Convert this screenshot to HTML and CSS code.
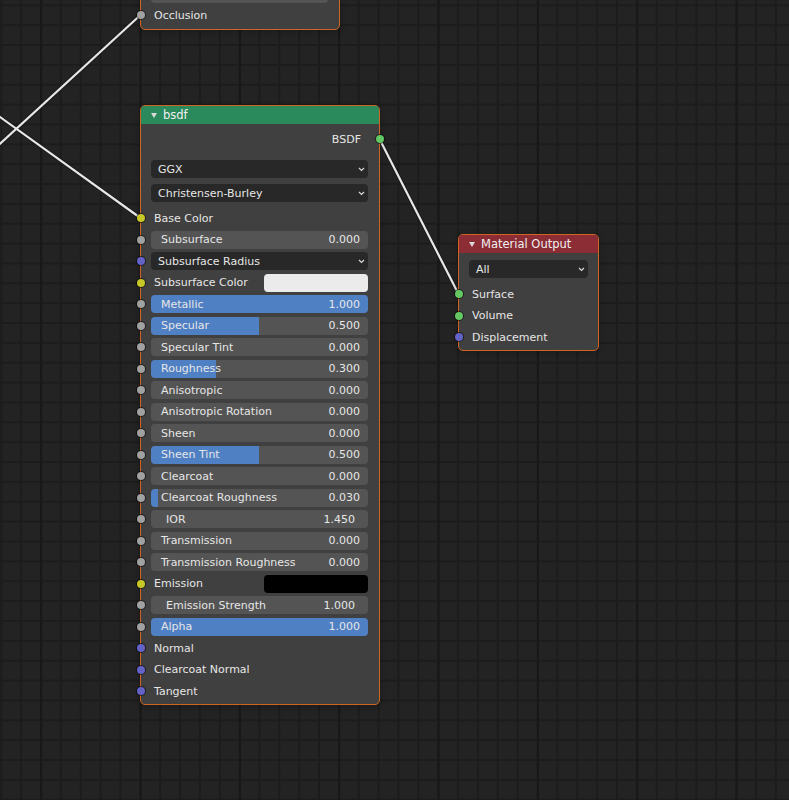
FILE: index.html
```html
<!DOCTYPE html>
<html lang="en">
<head>
  <meta charset="UTF-8" />
  <meta name="viewport" content="width=device-width, initial-scale=1" />
  <title>Shader Editor</title>
  <link rel="stylesheet" href="styles.css">
</head>
<body>

  <div class="canvas">
    <!-- noodles between sockets -->
    <svg class="links" width="789" height="800" viewBox="0 0 789 800">
      <g class="link-shadow">
        <line x1="140.5" y1="15" x2="-10" y2="152.9" />
        <line x1="140.5" y1="218" x2="-10" y2="109.8" />
        <line x1="379.5" y1="139" x2="458.5" y2="294" />
      </g>
      <g class="link-core">
        <line x1="140.5" y1="15" x2="-10" y2="152.9" />
        <line x1="140.5" y1="218" x2="-10" y2="109.8" />
        <line x1="379.5" y1="139" x2="458.5" y2="294" />
      </g>
    </svg>

    <!-- AO node (mostly above the view) -->
    <div class="node node-occ">
      <div class="node-body">
        <div class="row">
          <span class="socket socket-in s-float"></span>
          <div class="slider"></div>
        </div>
        <div class="row">
          <span class="socket socket-in s-float"></span>
          <span class="label">Occlusion</span>
        </div>
      </div>
    </div>

    <!-- PRINCIPLED BSDF -->
    <div class="node node-bsdf">
      <div class="node-head head-shader">
        <svg class="collapse" width="6" height="5" viewBox="0 0 6 5"><polygon points="0,0 6,0 3,5" /></svg>
        <span>bsdf</span>
      </div>
      <div class="node-body">
        <div class="row row-out">
          <span class="label">BSDF</span>
          <span class="socket socket-out s-shader"></span>
        </div>

        <div class="row row-select first">
          <div class="select">
            <span>GGX</span>
            <svg class="chevron" width="7" height="5" viewBox="0 0 7 5"><polyline points="1,1 3.5,3.5 6,1" /></svg>
          </div>
        </div>
        <div class="row row-select">
          <div class="select">
            <span>Christensen-Burley</span>
            <svg class="chevron" width="7" height="5" viewBox="0 0 7 5"><polyline points="1,1 3.5,3.5 6,1" /></svg>
          </div>
        </div>

        <div class="inputs">
          <div class="row">
            <span class="socket socket-in s-color"></span>
            <span class="label">Base Color</span>
          </div>
          <div class="row">
            <span class="socket socket-in s-float"></span>
            <div class="slider" style="--v:0%"><span>Subsurface</span><span>0.000</span></div>
          </div>
          <div class="row">
            <span class="socket socket-in s-vector"></span>
            <div class="select">
              <span>Subsurface Radius</span>
              <svg class="chevron" width="7" height="5" viewBox="0 0 7 5"><polyline points="1,1 3.5,3.5 6,1" /></svg>
            </div>
          </div>
          <div class="row">
            <span class="socket socket-in s-color"></span>
            <span class="label">Subsurface Color</span>
            <span class="swatch swatch-white"></span>
          </div>
          <div class="row">
            <span class="socket socket-in s-float"></span>
            <div class="slider" style="--v:100%"><span>Metallic</span><span>1.000</span></div>
          </div>
          <div class="row">
            <span class="socket socket-in s-float"></span>
            <div class="slider" style="--v:50%"><span>Specular</span><span>0.500</span></div>
          </div>
          <div class="row">
            <span class="socket socket-in s-float"></span>
            <div class="slider" style="--v:0%"><span>Specular Tint</span><span>0.000</span></div>
          </div>
          <div class="row">
            <span class="socket socket-in s-float"></span>
            <div class="slider" style="--v:30%"><span>Roughness</span><span>0.300</span></div>
          </div>
          <div class="row">
            <span class="socket socket-in s-float"></span>
            <div class="slider" style="--v:0%"><span>Anisotropic</span><span>0.000</span></div>
          </div>
          <div class="row">
            <span class="socket socket-in s-float"></span>
            <div class="slider" style="--v:0%"><span>Anisotropic Rotation</span><span>0.000</span></div>
          </div>
          <div class="row">
            <span class="socket socket-in s-float"></span>
            <div class="slider" style="--v:0%"><span>Sheen</span><span>0.000</span></div>
          </div>
          <div class="row">
            <span class="socket socket-in s-float"></span>
            <div class="slider" style="--v:50%"><span>Sheen Tint</span><span>0.500</span></div>
          </div>
          <div class="row">
            <span class="socket socket-in s-float"></span>
            <div class="slider" style="--v:0%"><span>Clearcoat</span><span>0.000</span></div>
          </div>
          <div class="row">
            <span class="socket socket-in s-float"></span>
            <div class="slider" style="--v:3%"><span>Clearcoat Roughness</span><span>0.030</span></div>
          </div>
          <div class="row">
            <span class="socket socket-in s-float"></span>
            <div class="slider num"><span>IOR</span><span>1.450</span></div>
          </div>
          <div class="row">
            <span class="socket socket-in s-float"></span>
            <div class="slider" style="--v:0%"><span>Transmission</span><span>0.000</span></div>
          </div>
          <div class="row">
            <span class="socket socket-in s-float"></span>
            <div class="slider" style="--v:0%"><span>Transmission Roughness</span><span>0.000</span></div>
          </div>
          <div class="row">
            <span class="socket socket-in s-color"></span>
            <span class="label">Emission</span>
            <span class="swatch swatch-black"></span>
          </div>
          <div class="row">
            <span class="socket socket-in s-float"></span>
            <div class="slider num"><span>Emission Strength</span><span>1.000</span></div>
          </div>
          <div class="row">
            <span class="socket socket-in s-float"></span>
            <div class="slider" style="--v:100%"><span>Alpha</span><span>1.000</span></div>
          </div>
          <div class="row">
            <span class="socket socket-in s-vector"></span>
            <span class="label">Normal</span>
          </div>
          <div class="row">
            <span class="socket socket-in s-vector"></span>
            <span class="label">Clearcoat Normal</span>
          </div>
          <div class="row">
            <span class="socket socket-in s-vector"></span>
            <span class="label">Tangent</span>
          </div>
        </div>
      </div>
    </div>

    <!-- OUTPUT -->
    <div class="node node-out">
      <div class="node-head head-output">
        <svg class="collapse" width="6" height="5" viewBox="0 0 6 5"><polygon points="0,0 6,0 3,5" /></svg>
        <span>Material Output</span>
      </div>
      <div class="node-body">
        <div class="row row-select first-out">
          <div class="select">
            <span>All</span>
            <svg class="chevron" width="7" height="5" viewBox="0 0 7 5"><polyline points="1,1 3.5,3.5 6,1" /></svg>
          </div>
        </div>
        <div class="inputs">
          <div class="row">
            <span class="socket socket-in s-shader"></span>
            <span class="label">Surface</span>
          </div>
          <div class="row">
            <span class="socket socket-in s-shader"></span>
            <span class="label">Volume</span>
          </div>
          <div class="row">
            <span class="socket socket-in s-vector"></span>
            <span class="label">Displacement</span>
          </div>
        </div>
      </div>
    </div>
  </div>

</body>
</html>
```

FILE: styles.css
```css
body {
  margin: 0;
  background-color: #232323;
  font-family: 'DejaVu Sans', sans-serif;
  font-size: 11px;
  color: #e6e6e6;
  overflow: hidden;
}

/* grid: minor cells + darker line every 5 cells */
.canvas {
  position: relative;
  width: 789px;
  height: 800px;
  overflow: hidden;
  background-color: #232323;
  background-image:
    linear-gradient(to right, #181818 1.5px, transparent 1.5px),
    linear-gradient(to right, #1c1c1c 1.5px, transparent 1.5px),
    linear-gradient(to bottom, #1c1c1c 1.5px, transparent 1.5px);
  background-size:
    99.35px 100%,
    19.87px 19.87px,
    19.87px 19.87px;
  background-position:
    40.3px 0,
    0.3px 4.3px,
    0.3px 4.3px;
}

.links {
  position: absolute;
  left: 0;
  top: 0;
}

.link-shadow line {
  stroke: #1a1a1a;
  stroke-width: 4;
}

.link-core line {
  stroke: #e8e8e8;
  stroke-width: 2.2;
}

.node {
  position: absolute;
  box-sizing: border-box;
  background-color: #404040;
  border: 1px solid #cf6423;
  border-radius: 5px;
  box-shadow: 0 2px 6px rgba(0, 0, 0, 0.25);
}

.node-occ {
  left: 140px;
  bottom: 770px;
  width: 200px;
}

.node-bsdf {
  left: 140px;
  top: 105px;
  width: 240px;
}

.node-out {
  left: 458px;
  top: 234px;
  width: 141px;
}

.node-head {
  height: 18px;
  display: flex;
  align-items: center;
  gap: 6px;
  padding-left: 10px;
  border-radius: 4px 4px 0 0;
  color: #f0f0f0;
  font-size: 11.5px;
}

.head-shader {
  background-color: #2b8a5c;
}

.head-output {
  background-color: #8c2c35;
}

.collapse polygon {
  fill: #dadada;
}

.node-body {
  padding: 4px 0 2.5px;
}

.node-occ .node-body {
  padding: 0 0 3.25px;
}

.row {
  position: relative;
  height: 21.5px;
  display: flex;
  align-items: center;
  padding: 0 11px 0 10px;
}

.node-out .row {
  padding-right: 10px;
}

.label {
  padding-left: 3px;
  white-space: nowrap;
}

.row-out {
  height: 22px;
  justify-content: flex-end;
}

.row-out .label {
  padding-right: 7px;
}

.row-select {
  height: 18px;
  margin-top: 6px;
}

.row-select.first {
  margin-top: 10px;
}

.row-select.first-out {
  margin-top: 3px;
}

.inputs {
  margin-top: 5.25px;
}

/* sockets sit on the node border */
.socket {
  position: absolute;
  top: 50%;
  width: 8px;
  height: 8px;
  margin-top: -4px;
  border-radius: 50%;
  box-shadow: 0 0 0 1px rgba(0, 0, 0, 0.55);
}

.socket-in {
  left: -4.5px;
}

.socket-out {
  right: -4.5px;
}

.s-float {
  background-color: #a1a1a1;
}

.s-color {
  background-color: #c7c729;
}

.s-vector {
  background-color: #6363c7;
}

.s-shader {
  background-color: #63c763;
}

.slider {
  flex: 1;
  height: 18px;
  box-sizing: border-box;
  display: flex;
  align-items: center;
  justify-content: space-between;
  padding: 0 8px 0 10px;
  border-radius: 4px;
  white-space: nowrap;
  background: linear-gradient(to right, #5080c4 var(--v, 0%), #545454 var(--v, 0%));
}

.slider.num {
  padding: 0 13px 0 15px;
  background: #545454;
}

.select {
  flex: 1;
  height: 18px;
  box-sizing: border-box;
  display: flex;
  align-items: center;
  justify-content: space-between;
  padding: 0 3px 0 7px;
  border-radius: 4px;
  background-color: #282828;
  white-space: nowrap;
}

.chevron polyline {
  fill: none;
  stroke: #d8d8d8;
  stroke-width: 1.2;
}

.swatch {
  margin-left: auto;
  width: 104px;
  height: 18px;
  border-radius: 4px;
}

.swatch-white {
  background-color: #ebebeb;
}

.swatch-black {
  background-color: #000;
}
```
